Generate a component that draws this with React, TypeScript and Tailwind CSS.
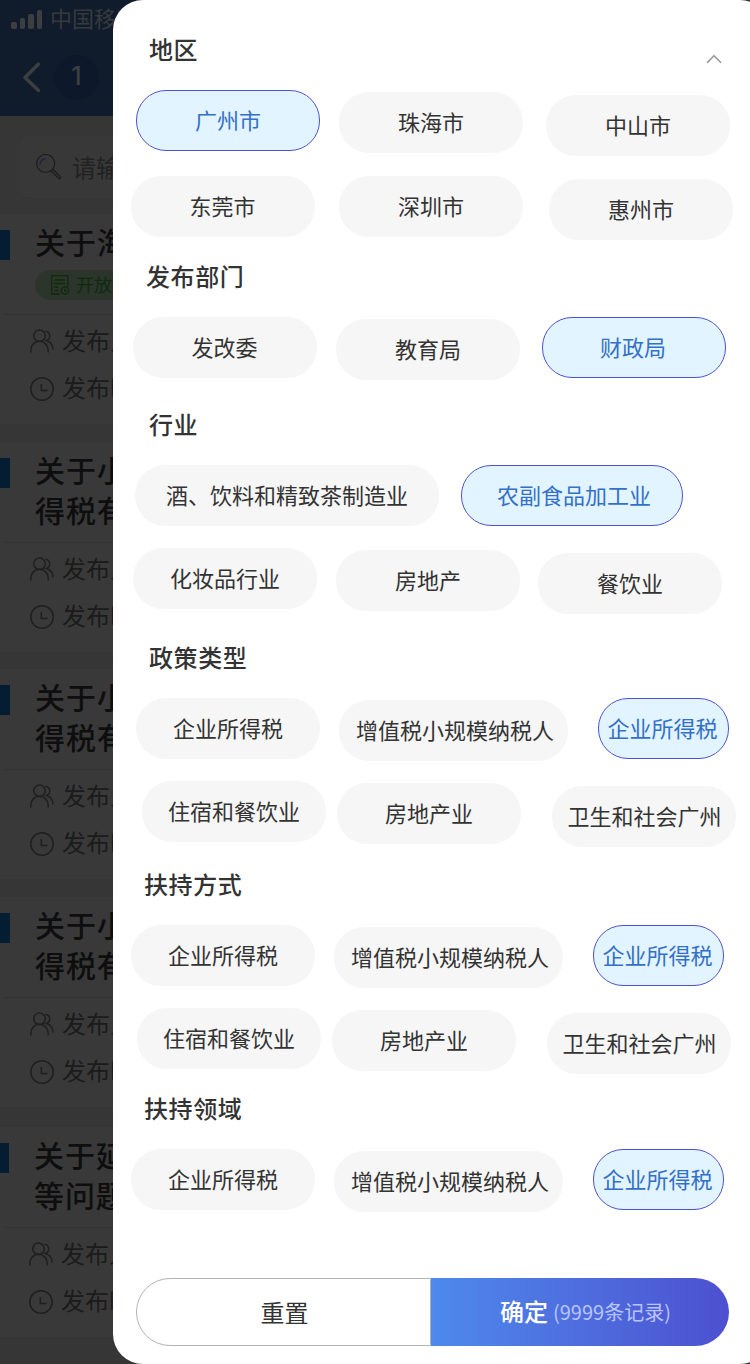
import { ChevronUp } from 'lucide-react';

type Chip = { label: string; box: string; active?: boolean };
type Section = { title: string; head: string; rows: Chip[][] };

const sections: Section[] = [
  {
    title: '地区',
    head: 'ml-[36px] h-[90px] pt-[31px]',
    rows: [
      [
        { label: '广州市', box: 'ml-[23px] w-[184px]', active: true },
        { label: '珠海市', box: 'ml-[19px] mt-[2px] w-[184px]' },
        { label: '中山市', box: 'ml-[23px] mt-[5px] w-[184px]' }
      ],
      [
        { label: '东莞市', box: 'ml-[18px] mt-[20px] w-[184px] pr-[1px]' },
        { label: '深圳市', box: 'ml-[24px] mt-[20px] w-[184px]' },
        { label: '惠州市', box: 'ml-[26px] mt-[23px] w-[184px]' }
      ]
    ]
  },
  {
    title: '发布部门',
    head: 'ml-[33px] h-[77px] pt-[18px]',
    rows: [
      [
        { label: '发改委', box: 'ml-[20px] w-[184px] pr-[1px]' },
        { label: '教育局', box: 'ml-[19px] mt-[2px] w-[184px]' },
        { label: '财政局', box: 'ml-[22px] w-[184px] pr-[2px]', active: true }
      ]
    ]
  },
  {
    title: '行业',
    head: 'ml-[36px] h-[85px] pt-[26px]',
    rows: [
      [
        { label: '酒、饮料和精致茶制造业', box: 'ml-[22px] w-[304px]' },
        { label: '农副食品加工业', box: 'ml-[22px] w-[222px] pl-[4px]', active: true }
      ],
      [
        { label: '化妆品行业', box: 'ml-[20px] mt-[22px] w-[184px]' },
        { label: '房地产', box: 'ml-[19px] mt-[24px] w-[184px]' },
        { label: '餐饮业', box: 'ml-[18px] mt-[27px] w-[184px]' }
      ]
    ]
  },
  {
    title: '政策类型',
    head: 'ml-[36px] h-[84px] pt-[25px]',
    rows: [
      [
        { label: '企业所得税', box: 'ml-[23px] w-[184px]' },
        { label: '增值税小规模纳税人', box: 'ml-[19px] mt-[2px] w-[229px] pl-[3px]' },
        { label: '企业所得税', box: 'ml-[30px] w-[131px] pr-[2px]', active: true }
      ],
      [
        { label: '住宿和餐饮业', box: 'ml-[29px] mt-[20px] w-[184px]' },
        { label: '房地产业', box: 'ml-[11px] mt-[22px] w-[184px]' },
        { label: '卫生和社会广州', box: 'ml-[31px] mt-[25px] w-[184px] pl-[1px]' }
      ]
    ]
  },
  {
    title: '扶持方式',
    head: 'ml-[31px] h-[78px] pt-[19px]',
    rows: [
      [
        { label: '企业所得税', box: 'ml-[18px] w-[184px]' },
        { label: '增值税小规模纳税人', box: 'ml-[19px] mt-[2px] w-[229px] pl-[3px]' },
        { label: '企业所得税', box: 'ml-[30px] w-[131px] pr-[2px]', active: true }
      ],
      [
        { label: '住宿和餐饮业', box: 'ml-[24px] mt-[20px] w-[184px]' },
        { label: '房地产业', box: 'ml-[11px] mt-[22px] w-[184px]' },
        { label: '卫生和社会广州', box: 'ml-[31px] mt-[25px] w-[184px] pl-[1px]' }
      ]
    ]
  },
  {
    title: '扶持领域',
    head: 'ml-[31px] h-[75px] pt-[16px]',
    rows: [
      [
        { label: '企业所得税', box: 'ml-[18px] w-[184px]' },
        { label: '增值税小规模纳税人', box: 'ml-[19px] mt-[2px] w-[229px] pl-[3px]' },
        { label: '企业所得税', box: 'ml-[30px] w-[131px] pr-[2px]', active: true }
      ]
    ]
  }
];

const articles = [
  { lines: ['关于海南'], tag: '开放', box: 'mb-[18px]' },
  { lines: ['关于小微', '得税有关'], box: 'mb-[17px]' },
  { lines: ['关于小微', '得税有关'], box: 'mb-[18px]' },
  { lines: ['关于小微', '得税有关'], box: 'mb-[20px]' },
  { lines: ['关于延续', '等问题的'], box: '-ml-px' }
];

function PeopleIcon() {
  return (
    <svg className="size-6 shrink-0" viewBox="0 0 24 24" fill="none" stroke="#1f1f1f" strokeWidth="1.5">
      <circle cx="9.5" cy="6.8" r="5.8" />
      <path d="M.8 23.500v-2.500a8.700 8.700 0 0 1 17.400 0v2.500" />
      <path d="M15.500 2.200a4.800 4.800 0 0 1 1 9.300c3.800 1.200 6.500 4.300 6.500 9" />
    </svg>
  );
}

function ClockIcon() {
  return (
    <svg className="size-6 shrink-0" viewBox="0 0 24 24" fill="none" stroke="#1f1f1f" strokeWidth="1.5">
      <circle cx="12" cy="12" r="11.200" />
      <path d="M11.300 7v6.500h6.200" />
    </svg>
  );
}

function TagIcon() {
  return (
    <svg className="h-5 w-[18px] shrink-0" viewBox="0 0 18 20" fill="none" stroke="#0f2b0c" strokeWidth="1.300">
      <path d="M9 19H.700V.700h16.100v11" />
      <path d="M3.500 5h10.500M3.500 8.500h10.500M3.500 12h4M3.500 15.500h4" />
      <circle cx="14" cy="15.500" r="3.700" />
      <path d="M13.800 13.800v2h2" />
    </svg>
  );
}

function Background() {
  return (
    <div className="flex h-[1364px] w-[160px] flex-col overflow-hidden bg-[#363636]">
      <header className="h-[116px] shrink-0 bg-[#101c2c]">
        <div className="flex h-[38px] items-center">
          <div className="ml-[11px] flex h-[19px] items-end gap-[3px]">
            <span className="h-[7px] w-[5.500px] rounded-[2px] bg-[#3d3e40]" />
            <span className="h-[11px] w-[5.500px] rounded-[2px] bg-[#3d3e40]" />
            <span className="h-[15px] w-[5.500px] rounded-[2px] bg-[#3d3e40]" />
            <span className="h-[19px] w-[5.500px] rounded-[2px] bg-[#3d3e40]" />
          </div>
          <span className="ml-2 pb-[3px] text-[22px] leading-[35px] whitespace-nowrap text-[#36393d]">中国移动</span>
        </div>
        <div className="mt-[16px] flex h-[46px] items-center">
          <svg className="ml-[22px] h-[32px] w-[20px]" viewBox="0 0 20 32" fill="none" stroke="#3d3e40" strokeWidth="3.500" strokeLinecap="round" strokeLinejoin="round">
            <path d="M16.500 3L3 16.500l13.500 13" />
          </svg>
          <span className="ml-[12px] flex size-[45px] items-center justify-center rounded-full bg-[#0d182a] font-['Inter',sans-serif] text-[25px] font-medium text-[#3d3e40]">
            1
          </span>
        </div>
      </header>
      <div className="mt-5 ml-5 flex h-[61px] w-[140px] shrink-0 items-center rounded-tl-[8px] rounded-bl-[8px] bg-[#383838]">
        <svg className="ml-[16px] size-[26px] shrink-0" viewBox="0 0 26 26" fill="none" stroke="#1c1c1c" strokeWidth="1.200">
          <circle cx="9.700" cy="9.500" r="9" />
          <path d="M4 10.500a5.800 5.800 0 0 1 5.500-5.800" stroke="#20203c" />
          <path d="M14.500 16.500l9 8.500 1.200-2-8-8" />
        </svg>
        <span className="ml-[10px] text-[24px] whitespace-nowrap text-[#212121]">请输入</span>
      </div>
      <div className="mt-[17px] flex shrink-0 flex-col">
        {articles.map((article, i) => (
          <article key={i} className={`flex h-[210px] shrink-0 flex-col bg-[#393939] pt-[10px] ${article.box}`}>
            <div className="flex h-[90px] shrink-0">
              <span className="mt-[6px] h-[30px] w-[10px] shrink-0 bg-[#051d33]" />
              <div className="ml-[25px]">
                {article.lines.map((line) => (
                  <p key={line} className="h-[40px] text-[30px] leading-[34px] font-medium tracking-[0.900px] whitespace-nowrap text-[#0e0e0e]">
                    {line}
                  </p>
                ))}
                {article.tag && (
                  <div className="mt-[6px] flex h-[30px] w-[125px] items-center rounded-full bg-[#2c352c] pl-[16px]">
                    <TagIcon />
                    <span className="ml-[7px] pb-[2px] text-[18px] whitespace-nowrap text-[#0f2b0c]">{article.tag}</span>
                  </div>
                )}
              </div>
            </div>
            <div className="ml-1 border-t border-[#333]" />
            <div className="mt-[2px] ml-[30px] flex h-[48px] items-center gap-2 text-[24px] whitespace-nowrap text-[#1b1b1b]">
              <PeopleIcon />
              <span className="pb-[3px]">发布人</span>
            </div>
            <div className="ml-[30px] flex h-[47px] items-center gap-2 text-[24px] whitespace-nowrap text-[#1b1b1b]">
              <ClockIcon />
              <span className="pb-1">发布时间</span>
            </div>
          </article>
        ))}
      </div>
    </div>
  );
}

function FilterChip({ label, box, active }: Chip) {
  return (
    <button
      className={`flex h-[61px] shrink-0 items-center justify-center rounded-[30px] pb-[2px] text-[22px] whitespace-nowrap ${box} ${
        active ? 'border border-[#4c53d2] bg-[#e1f4ff] text-[#3470c8]' : 'bg-[#f6f6f6] text-[#333]'
      }`}
    >
      {label}
    </button>
  );
}

export default function App() {
  return (
    <div className="relative h-[1364px] w-[750px] overflow-hidden bg-[#363636] font-['Noto_Sans_CJK_SC',sans-serif]">
      <Background />
      <aside className="absolute top-0 left-[113px] flex h-[1364px] w-[657px] flex-col rounded-[30px] bg-white">
        {sections.map((section, i) => (
          <section key={section.title}>
            <div className={`flex items-start ${section.head}`}>
              <h2 className="text-[24px] leading-[36px] font-medium tracking-[0.600px] text-[#333]">{section.title}</h2>
              {i === 0 && <ChevronUp className="mt-[15px] ml-[503px] size-[26px] text-[#999]" strokeWidth={1.6} />}
            </div>
            {section.rows.map((row, r) => (
              <div key={r} className="flex items-start">
                {row.map((chip, c) => (
                  <FilterChip key={c} {...chip} />
                ))}
              </div>
            ))}
          </section>
        ))}
        <footer className="mt-[66px] ml-[23px] flex h-[68px] w-[593px] shrink-0">
          <button className="w-[295px] rounded-l-[34px] border border-[#b2b2b2] pl-[2px] text-[24px] text-[#333]">重置</button>
          <button className="flex flex-1 items-center rounded-r-[34px] bg-linear-to-r from-[#4e89ed] to-[#4c50cf] pl-[69px] text-[24px] text-white">
            <span className="pb-[2px] font-medium">确定</span>
            <span className="ml-[5px] text-[20px] whitespace-nowrap text-[#b9c4ff]">(9999条记录)</span>
          </button>
        </footer>
      </aside>
    </div>
  );
}
